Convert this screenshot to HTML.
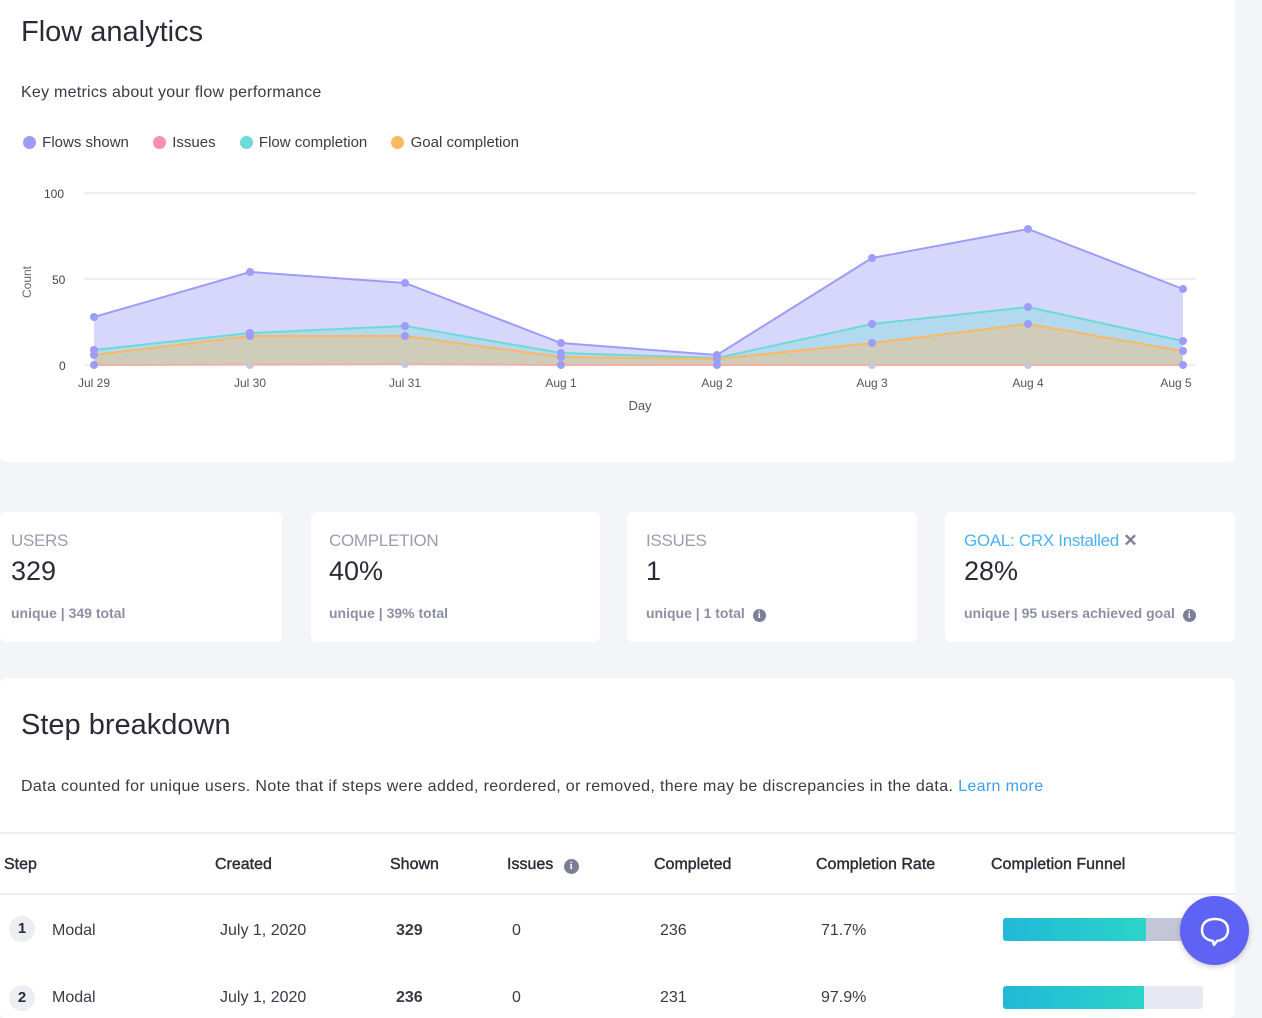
<!DOCTYPE html>
<html><head><meta charset="utf-8"><style>
*{box-sizing:border-box;margin:0;padding:0}
body{width:1262px;height:1006px;overflow:hidden;background:#f4f5f9;font-family:"Liberation Sans",sans-serif;color:#2b2b38;position:relative}
.card{position:absolute;background:#fff;border-radius:6px}
.t{position:absolute;white-space:nowrap}
.lbl{font-size:17px;color:#9a9db0;letter-spacing:-.3px}
.big{font-size:27px;color:#2b2b38}
.sub{font-size:14px;color:#8c8fa4;font-weight:bold}
.info{display:inline-block;width:13px;height:13px;border-radius:50%;background:#7c8097;color:#fff;font-size:10px;text-align:center;line-height:13px;vertical-align:0px;margin-left:4px;font-family:"Liberation Serif",serif;font-weight:bold}
.th{font-size:16px;color:#2b2b38;top:856px;font-weight:normal;-webkit-text-stroke:.4px #2b2b38}
.td{font-size:16px;color:#3a3a46}
.num{position:absolute;width:26px;height:26px;border-radius:50%;background:#eceef4;font-size:15px;font-weight:bold;text-align:center;line-height:26px}
.dot{display:inline-block;width:13px;height:13px;border-radius:50%;vertical-align:-2px;margin-right:2px}
</style></head><body>
<div class="card" style="left:0;top:-10px;width:1235px;height:472px"></div>
<div class="t" style="left:21px;top:16px;font-size:29px;color:#2b2b38">Flow analytics</div>
<div class="t" style="left:21px;top:84px;font-size:16px;color:#3a3a46;letter-spacing:.25px">Key metrics about your flow performance</div>
<div class="t" style="left:23px;top:134px;font-size:15px;color:#3a3a46">
<span class="dot" style="background:#9d9cf8"></span> Flows shown
<span class="dot" style="background:#f98eb6;margin-left:20px"></span> Issues
<span class="dot" style="background:#6ddad6;margin-left:20px"></span> Flow completion
<span class="dot" style="background:#fbb862;margin-left:20px"></span> Goal completion</div>
<svg style="position:absolute;left:0;top:0" width="1262" height="430">
<g stroke="#eeeef0" stroke-width="2"><line x1="84" y1="193" x2="1196" y2="193"/><line x1="84" y1="279" x2="1196" y2="279"/><line x1="84" y1="365" x2="1196" y2="365"/></g>
<g font-family="Liberation Sans" font-size="12" fill="#444">
<text x="44" y="198">100</text><text x="52" y="284">50</text><text x="59" y="370">0</text>
<text x="31" y="298" transform="rotate(-90 31 298)" fill="#666">Count</text>
<g text-anchor="middle" fill="#555"><text x="94" y="387">Jul 29</text><text x="250" y="387">Jul 30</text><text x="405" y="387">Jul 31</text><text x="561" y="387">Aug 1</text><text x="717" y="387">Aug 2</text><text x="872" y="387">Aug 3</text><text x="1028" y="387">Aug 4</text><text x="1176" y="387">Aug 5</text>
<text x="640" y="410" font-size="13">Day</text></g></g>
<path d="M94 317L250 272L405 283L561 343L717 355L872 258L1028 229L1183 289L1183 365L94 365Z" fill="#d7d7fc"/>
<path d="M94 350L250 333L405 326L561 353L717 358L872 324L1028 307L1183 341L1183 365L94 365Z" fill="#b2d9ee"/>
<path d="M94 355L250 336L405 336L561 357L717 359L872 343L1028 324L1183 351L1183 365L94 365Z" fill="#cfccb9"/>
<g fill="none" stroke-width="2">
<path d="M94 317L250 272L405 283L561 343L717 355L872 258L1028 229L1183 289" stroke="#9d9cf8"/>
<path d="M94 350L250 333L405 326L561 353L717 358L872 324L1028 307L1183 341" stroke="#6ddad6"/>
<path d="M94 355L250 336L405 336L561 357L717 359L872 343L1028 324L1183 351" stroke="#fbb862"/>
<path d="M94 365L405 364L561 365L1183 365" stroke="#f0b0a8"/></g>
<g fill="#9d9cf8">
<circle cx="94" cy="317" r="4"/><circle cx="250" cy="272" r="4"/><circle cx="405" cy="283" r="4"/><circle cx="561" cy="343" r="4"/><circle cx="717" cy="355" r="4"/><circle cx="872" cy="258" r="4"/><circle cx="1028" cy="229" r="4"/><circle cx="1183" cy="289" r="4"/>
<circle cx="94" cy="350" r="4"/><circle cx="250" cy="333" r="4"/><circle cx="405" cy="326" r="4"/><circle cx="561" cy="353" r="4"/><circle cx="872" cy="324" r="4"/><circle cx="1028" cy="307" r="4"/><circle cx="1183" cy="341" r="4"/>
<circle cx="94" cy="355" r="4"/><circle cx="250" cy="336" r="4"/><circle cx="405" cy="336" r="4"/><circle cx="561" cy="357" r="4"/><circle cx="717" cy="359" r="4"/><circle cx="872" cy="343" r="4"/><circle cx="1028" cy="324" r="4"/><circle cx="1183" cy="351" r="4"/>
<circle cx="94" cy="365" r="4"/><circle cx="561" cy="365" r="4"/><circle cx="717" cy="365" r="4"/><circle cx="1183" cy="365" r="4"/></g>
<g fill="#c8c8ce"><circle cx="250" cy="365" r="4"/><circle cx="405" cy="364" r="4"/><circle cx="872" cy="365" r="4"/><circle cx="1028" cy="365" r="4"/></g>
</svg>

<div class="card" style="left:0;top:512px;width:282px;height:130px"></div>
<div class="card" style="left:311px;top:512px;width:289px;height:130px"></div>
<div class="card" style="left:627px;top:512px;width:290px;height:130px"></div>
<div class="card" style="left:945px;top:512px;width:290px;height:130px"></div>
<div class="t lbl" style="left:11px;top:531px">USERS</div><div class="t big" style="left:11px;top:556px">329</div><div class="t sub" style="left:11px;top:605px">unique | 349 total</div>
<div class="t lbl" style="left:329px;top:531px">COMPLETION</div><div class="t big" style="left:329px;top:556px">40%</div><div class="t sub" style="left:329px;top:605px">unique | 39% total</div>
<div class="t lbl" style="left:646px;top:531px">ISSUES</div><div class="t big" style="left:646px;top:556px">1</div><div class="t sub" style="left:646px;top:605px">unique | 1 total <span class="info">i</span></div>
<div class="t lbl" style="left:964px;top:531px;color:#4ab2f5">GOAL: CRX Installed <span style="color:#7c8097;font-weight:bold">✕</span></div><div class="t big" style="left:964px;top:556px">28%</div><div class="t sub" style="left:964px;top:605px">unique | 95 users achieved goal <span class="info">i</span></div>

<div class="card" style="left:0;top:678px;width:1235px;height:340px"></div>
<div class="t" style="left:21px;top:709px;font-size:29px;color:#2b2b38">Step breakdown</div>
<div class="t" style="left:21px;top:778px;font-size:16px;color:#3a3a46;letter-spacing:.36px">Data counted for unique users. Note that if steps were added, reordered, or removed, there may be discrepancies in the data. <span style="color:#3d9ff0">Learn more</span></div>
<div style="position:absolute;left:0;top:832px;width:1235px;height:2px;background:#eeeef2"></div>
<div style="position:absolute;left:0;top:893px;width:1235px;height:2px;background:#eeeef2"></div>
<div class="t th" style="left:4px">Step</div>
<div class="t th" style="left:215px">Created</div>
<div class="t th" style="left:390px">Shown</div>
<div class="t th" style="left:507px">Issues <span class="info" style="width:15px;height:15px;line-height:15px;-webkit-text-stroke:0;margin-left:6px">i</span></div>
<div class="t th" style="left:654px">Completed</div>
<div class="t th" style="left:816px">Completion Rate</div>
<div class="t th" style="left:991px">Completion Funnel</div>

<div class="num" style="left:9px;top:916px">1</div>
<div class="t td" style="left:52px;top:922px">Modal</div><div class="t td" style="left:220px;top:922px">July 1, 2020</div>
<div class="t td" style="left:396px;top:922px;font-weight:bold">329</div><div class="t td" style="left:512px;top:922px">0</div>
<div class="t td" style="left:660px;top:922px">236</div><div class="t td" style="left:821px;top:922px">71.7%</div>
<div style="position:absolute;left:1003px;top:918px;width:200px;height:23px;border-radius:3px;background:#c3c6d6;overflow:hidden"><div style="width:143px;height:100%;background:linear-gradient(90deg,#22b8d8,#2bd4c8)"></div></div>

<div class="num" style="left:9px;top:985px">2</div>
<div class="t td" style="left:52px;top:989px">Modal</div><div class="t td" style="left:220px;top:989px">July 1, 2020</div>
<div class="t td" style="left:396px;top:989px;font-weight:bold">236</div><div class="t td" style="left:512px;top:989px">0</div>
<div class="t td" style="left:660px;top:989px">231</div><div class="t td" style="left:821px;top:989px">97.9%</div>
<div style="position:absolute;left:1003px;top:986px;width:200px;height:23px;border-radius:3px;background:#e6e9f1;overflow:hidden"><div style="width:141px;height:100%;background:linear-gradient(90deg,#22b8d8,#2bd4c8)"></div></div>

<div style="position:absolute;left:1180px;top:896px;width:69px;height:69px;border-radius:50%;background:#5f63f5;box-shadow:0 2px 6px rgba(0,0,0,.2)"></div>
<svg style="position:absolute;left:1198px;top:914px" width="34" height="34" viewBox="0 0 34 34"><path d="M17 5C9 5 4 9 4 16c0 6 4 10 11 11l1 4 3-4c7-1 11-5 11-11 0-7-5-11-13-11z" fill="none" stroke="#fff" stroke-width="2.5" stroke-linejoin="round"/></svg>
</body></html>
